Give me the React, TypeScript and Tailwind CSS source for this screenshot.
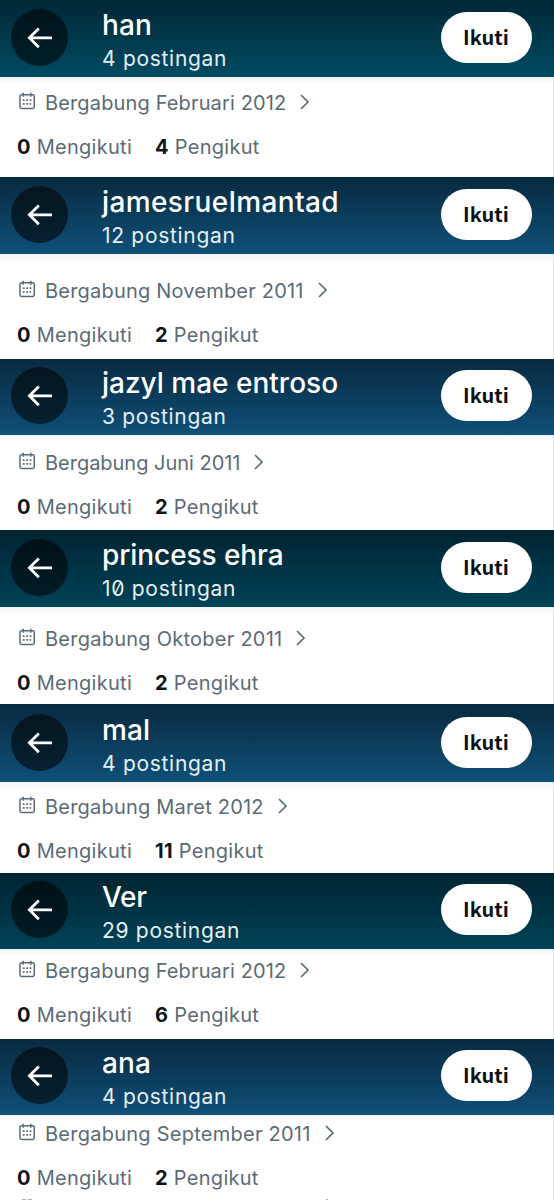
import React from 'react';
import { clsx } from 'clsx';

type Profile = {
  name: string;
  posts: string;
  joined: string;
  followers: string;
  header: string;
  body: string;
  nameClass: string;
  joinedClass: string;
};

const TEAL = 'from-[#002431] to-[#004358]';
const BLUE = 'from-[#082a40] to-[#0f5079]';

const PROFILES: Profile[] = [
  { name: 'han', posts: '4', joined: 'Februari 2012', followers: '4', header: 'h-[77px] from-[#002736] to-[#004c63]', body: 'h-[100px] pt-[11px]', nameClass: 'tracking-[0.1px]', joinedClass: 'tracking-[0.14px]' },
  { name: 'jamesruelmantad', posts: '12', joined: 'November 2011', followers: '2', header: clsx('h-[77px]', BLUE), body: 'h-[105px] pt-[22px]', nameClass: 'tracking-[0.4px]', joinedClass: 'tracking-[0.2px]' },
  { name: 'jazyl mae entroso', posts: '3', joined: 'Juni 2011', followers: '2', header: clsx('h-[76px]', BLUE), body: 'h-[95px] pt-[13px]', nameClass: 'tracking-[0px]', joinedClass: 'tracking-[-0.02px]' },
  { name: 'princess ehra', posts: '10', joined: 'Oktober 2011', followers: '2', header: clsx('h-[77px]', TEAL), body: 'h-[97px] pt-[17px]', nameClass: 'tracking-[-0.08px]', joinedClass: 'tracking-[0.25px]' },
  { name: 'mal', posts: '4', joined: 'Maret 2012', followers: '11', header: clsx('h-[78px]', BLUE), body: 'h-[91px] pt-[10px]', nameClass: 'tracking-[0.1px]', joinedClass: 'tracking-[0.2px]' },
  { name: 'Ver', posts: '29', joined: 'Februari 2012', followers: '6', header: clsx('h-[76px]', TEAL), body: 'h-[90px] pt-[7px]', nameClass: 'tracking-[-0.3px]', joinedClass: 'tracking-[0.14px]' },
  { name: 'ana', posts: '4', joined: 'September 2011', followers: '2', header: clsx('h-[76px]', BLUE), body: 'h-[85px] pt-[4px]', nameClass: 'tracking-[0.1px]', joinedClass: 'tracking-[0.25px]' },
];

function ArrowIcon() {
  return (
    <svg width="26" height="22" viewBox="0 0 26 22" fill="none" stroke="#fff" strokeWidth="2.8">
      <path d="M11.8 1.4 2.4 10.8l9.4 9.4M2.6 10.8H25" />
    </svg>
  );
}

function CalendarIcon() {
  return (
    <svg width="18" height="18" viewBox="0 0 18 18" fill="none" stroke="#5b6b76" strokeWidth="1.5" className="mb-[4px] shrink-0">
      <rect x="1.95" y="2.75" width="14.3" height="13.7" rx="1.6" />
      <path d="M5.2 .8v4M12.8 .8v4" />
      <path d="M8.2 8.2H10M11.6 8.2h1.8M4.8 11.8h1.8M8.2 11.8H10M4.8 8.2h1.8M11.6 11.8H13" strokeWidth="1.7" />
    </svg>
  );
}

function ChevronIcon() {
  return (
    <svg width="10" height="16" viewBox="0 0 10 16" fill="none" stroke="#5b6b76" strokeWidth="1.7" className="mb-[3px] ml-[14px] shrink-0">
      <path d="m1 1 7 7-7 7" />
    </svg>
  );
}

function ProfileCard({ profile }: { profile: Profile }) {
  return (
    <section>
      {/* Header */}
      <div className={clsx('flex items-end bg-linear-to-b pl-[11px] pr-[22.5px]', profile.header)}>
        <button className="mb-[11px] flex size-[57px] shrink-0 items-center justify-center rounded-full bg-black/55">
          <ArrowIcon />
        </button>
        <div className="ml-[34px] flex-1 whitespace-nowrap text-white">
          <h2 className={clsx('mb-px text-[28px] font-medium leading-[34px]', profile.nameClass)}>{profile.name}</h2>
          <p className="pb-[3px] text-[21px] leading-[31px] tracking-[0.7px] text-[#e6f0f4] [font-feature-settings:'zero']">
            {profile.posts} postingan
          </p>
        </div>
        <button className="mb-[14px] h-[51px] w-[91px] shrink-0 rounded-full bg-white pb-[2px] font-['Noto_Sans_CJK_SC',sans-serif] text-[20px] font-bold leading-[28px] tracking-[0.1px] text-[#0b0f12]">
          Ikuti
        </button>
      </div>

      {/* Details */}
      <div className={clsx('overflow-hidden whitespace-nowrap border-r border-[#dfe3e5] bg-linear-to-b from-[#f0f2f4] to-white to-[7px] text-[20px] text-[#5b6b76]', profile.body)}>
        <div className="flex h-[30px] items-center pl-[18px]">
          <CalendarIcon />
          <span className={clsx('ml-[9px]', profile.joinedClass)}>Bergabung {profile.joined}</span>
          <ChevronIcon />
        </div>
        <div className="mt-[14px] flex h-[30px] items-center gap-[23px] pl-[17px] tracking-[0.28px]">
          <span><b className="font-bold text-[#0f1419]">0</b> Mengikuti</span>
          <span><b className="font-bold text-[#0f1419]">{profile.followers}</b> Pengikut</span>
        </div>
      </div>
    </section>
  );
}

export default function App() {
  return (
    <main className="relative h-[1200px] w-[554px] overflow-hidden bg-white font-['Inter',sans-serif]">
      {PROFILES.map((p) => (
        <ProfileCard key={p.name} profile={p} />
      ))}
      {/* top of the next line, cut off by the screen edge */}
      <svg width="320" height="2" viewBox="0 0 320 2" fill="#a9b1b7" className="absolute bottom-0 left-[20px]">
        <path d="M2 1h4v1H2zM8 1h4v1H8zM306 1h2v1h-2z" />
      </svg>
    </main>
  );
}
